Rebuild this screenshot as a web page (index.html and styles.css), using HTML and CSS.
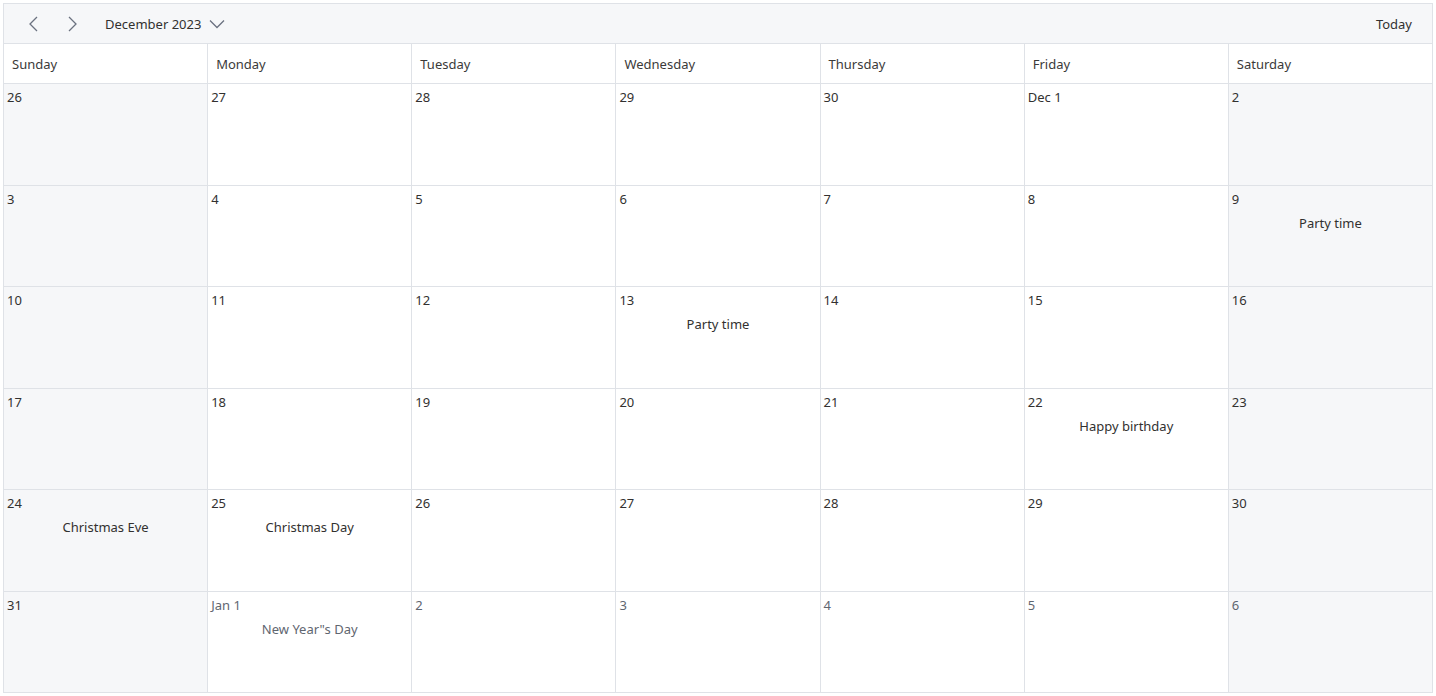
FILE: index.html
```html
<!DOCTYPE html>
<html lang="en">
  <head>
    <meta charset="UTF-8" />
    <title>Month calendar</title>
    <link rel="stylesheet" href="styles.css">
  </head>
  <body>
    <div class="calendar">
      <div class="toolbar">
        <button class="nav-btn" aria-label="Previous">
          <svg width="14" height="16" viewBox="0 0 14 16"><path d="M10 1 L3 8 L10 15" fill="none" stroke="#6b7280" stroke-width="1.3"/></svg>
        </button>
        <button class="nav-btn" aria-label="Next">
          <svg width="14" height="16" viewBox="0 0 14 16"><path d="M4 1 L11 8 L4 15" fill="none" stroke="#6b7280" stroke-width="1.3"/></svg>
        </button>
        <button class="month-btn">
          December 2023
          <svg width="16" height="10" viewBox="0 0 16 10"><path d="M1 1.5 L8 8.5 L15 1.5" fill="none" stroke="#6b7280" stroke-width="1.3"/></svg>
        </button>
        <div class="spacer"></div>
        <button class="today-btn">Today</button>
      </div>

      <div class="grid">
        <div class="head">Sunday</div>
        <div class="head">Monday</div>
        <div class="head">Tuesday</div>
        <div class="head">Wednesday</div>
        <div class="head">Thursday</div>
        <div class="head">Friday</div>
        <div class="head">Saturday</div>

        <div class="day weekend"><span class="num">26</span></div>
        <div class="day"><span class="num">27</span></div>
        <div class="day"><span class="num">28</span></div>
        <div class="day"><span class="num">29</span></div>
        <div class="day"><span class="num">30</span></div>
        <div class="day"><span class="num">Dec 1</span></div>
        <div class="day weekend"><span class="num">2</span></div>

        <div class="day weekend"><span class="num">3</span></div>
        <div class="day"><span class="num">4</span></div>
        <div class="day"><span class="num">5</span></div>
        <div class="day"><span class="num">6</span></div>
        <div class="day"><span class="num">7</span></div>
        <div class="day"><span class="num">8</span></div>
        <div class="day weekend"><span class="num">9</span><div class="event">Party time</div></div>

        <div class="day weekend"><span class="num">10</span></div>
        <div class="day"><span class="num">11</span></div>
        <div class="day"><span class="num">12</span></div>
        <div class="day"><span class="num">13</span><div class="event">Party time</div></div>
        <div class="day"><span class="num">14</span></div>
        <div class="day"><span class="num">15</span></div>
        <div class="day weekend"><span class="num">16</span></div>

        <div class="day weekend"><span class="num">17</span></div>
        <div class="day"><span class="num">18</span></div>
        <div class="day"><span class="num">19</span></div>
        <div class="day"><span class="num">20</span></div>
        <div class="day"><span class="num">21</span></div>
        <div class="day"><span class="num">22</span><div class="event">Happy birthday</div></div>
        <div class="day weekend"><span class="num">23</span></div>

        <div class="day weekend"><span class="num">24</span><div class="event">Christmas Eve</div></div>
        <div class="day"><span class="num">25</span><div class="event">Christmas Day</div></div>
        <div class="day"><span class="num">26</span></div>
        <div class="day"><span class="num">27</span></div>
        <div class="day"><span class="num">28</span></div>
        <div class="day"><span class="num">29</span></div>
        <div class="day weekend"><span class="num">30</span></div>

        <div class="day weekend"><span class="num">31</span></div>
        <div class="day other"><span class="num">Jan 1</span><div class="event">New Year"s Day</div></div>
        <div class="day other"><span class="num">2</span></div>
        <div class="day other"><span class="num">3</span></div>
        <div class="day other"><span class="num">4</span></div>
        <div class="day other"><span class="num">5</span></div>
        <div class="day weekend other"><span class="num">6</span></div>
      </div>
    </div>
  </body>
</html>
```

FILE: styles.css
```css
body {
  margin: 3px;
  font-family: "Noto Sans", "Open Sans", sans-serif;
  font-size: 13px;
  color: #323130;
  background: #fff;
}

.calendar {
  width: 1430px;
  border: 1px solid #dfe2e7;
  box-sizing: border-box;
}

.toolbar {
  height: 39px;
  display: flex;
  align-items: center;
  background: #f6f7f9;
  border-bottom: 1px solid #dfe2e7;
  padding: 0 10px 0 18px;
}

button {
  font-family: inherit;
  font-size: 13px;
  color: #323130;
  background: none;
  border: none;
  cursor: pointer;
  padding: 0;
}

.nav-btn {
  width: 24px;
  height: 28px;
  display: flex;
  align-items: center;
  justify-content: center;
  margin-right: 14px;
}

.month-btn {
  display: flex;
  align-items: center;
  gap: 8px;
  margin-left: 7px;
}

.spacer {
  flex: 1;
}

.today-btn {
  padding: 4px 10px;
}

.grid {
  display: grid;
  grid-template-columns: repeat(7, 1fr);
  grid-template-rows: 39px repeat(6, 1fr);
  gap: 1px;
  height: 648px;
  background: #dfe2e7;
}

.head {
  background: #fff;
  padding: 11px 0 0 8px;
  color: #3b3a39;
}

.day {
  background: #fff;
  padding: 4px 3px 0;
}

.day.weekend {
  background: #f6f7f9;
}

.day.other {
  color: #5f6670;
}

.num {
  line-height: 18px;
}

.event {
  text-align: center;
  margin-top: 6px;
  line-height: 18px;
}
```
